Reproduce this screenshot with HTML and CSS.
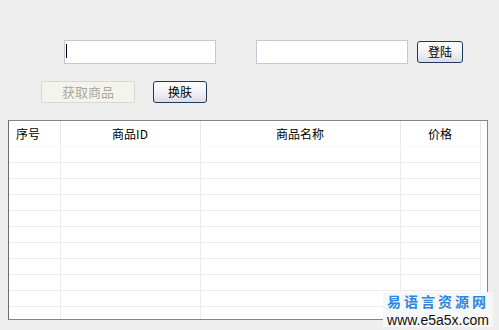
FILE: index.html
```html
<!DOCTYPE html>
<html lang="zh-CN">
<head>
  <meta charset="UTF-8" />
  <title>商品列表</title>
  <link rel="stylesheet" href="styles.css">
</head>
<body>
  <div class="login-row">
    <div class="field caret"><input type="text" class="box" /></div>
    <input type="password" class="box box-pass" />
    <button class="btn btn-login">登陆</button>
  </div>

  <div class="action-row">
    <button class="btn btn-disabled" disabled>获取商品</button>
    <button class="btn btn-skin">换肤</button>
  </div>

  <div class="list">
    <table class="grid">
      <colgroup>
        <col class="c-no"><col class="c-id"><col class="c-name"><col class="c-price">
      </colgroup>
      <thead>
        <tr>
          <th class="left">序号</th>
          <th>商品ID</th>
          <th>商品名称</th>
          <th>价格</th>
        </tr>
      </thead>
      <tbody id="rows"></tbody>
    </table>
  </div>

  <div class="mark">
    <div class="mark-cn">易语言资源网</div>
    <div class="mark-en">www.e5a5x.com</div>
  </div>

  <script>
    const rows = document.getElementById('rows');
    for (let i = 0; i < 11; i++) {
      const tr = document.createElement('tr');
      tr.innerHTML = '<td></td><td></td><td></td><td></td>';
      rows.appendChild(tr);
    }
  </script>
</body>
</html>
```

FILE: styles.css
```css
html, body {
  margin: 0;
  height: 100%;
}
body {
  font-family: "Noto Sans CJK SC", "Liberation Sans", sans-serif;
  font-size: 12px;
  background: #eeeeee;
  color: #000;
  position: relative;
  overflow: hidden;
}
.login-row {
  display: flex;
  align-items: center;
  padding: 40px 0 0 64px;
  height: 24px;
}
.field {
  position: relative;
}
.box {
  display: block;
  width: 152px;
  height: 24px;
  box-sizing: border-box;
  border: 1px solid #c4c6d4;
  background: #fff;
  margin: 0;
  padding: 0 3px;
  outline: none;
}
.caret::after {
  content: "";
  position: absolute;
  left: 2px;
  top: 4px;
  width: 1px;
  height: 14px;
  background: #000;
}
.box-pass {
  margin-left: 40px;
}
.btn {
  height: 22px;
  box-sizing: border-box;
  margin: 0;
  padding: 0;
  font-family: "Noto Sans CJK SC", sans-serif;
  font-size: 12px;
  line-height: 20px;
  color: #000;
  border: 1px solid #1c3a5e;
  border-radius: 3px;
  background: linear-gradient(#ffffff 0%, #f4f4f6 45%, #dcdce6 100%);
}
.btn-login {
  width: 46px;
  margin-left: 9px;
}
.action-row {
  display: flex;
  align-items: center;
  padding: 17px 0 0 41px;
  gap: 18px;
}
.btn-disabled {
  width: 94px;
  font-size: 13px;
  color: #aca899;
  border-color: #d8d8cc;
  border-radius: 2px;
  background: #f4f4ef;
}
.btn-skin {
  width: 54px;
}
.list {
  margin: 17px 0 0 8px;
  width: 480px;
  height: 200px;
  box-sizing: border-box;
  border: 1px solid #858585;
  border-left-color: #6e6e6e;
  background: #fff;
  overflow: hidden;
}
.grid {
  table-layout: fixed;
  border-collapse: collapse;
  width: 471px;
}
.c-no { width: 51px; }
.c-id { width: 140px; }
.c-name { width: 200px; }
.c-price { width: 80px; }
.grid th {
  height: 24px;
  padding: 0 0 1px 0;
  font-weight: normal;
  text-align: center;
  border-right: 1px solid #e6e6e6;
  border-bottom: 1px solid #fafafa;
}
.grid th.left {
  text-align: left;
  padding-left: 7px;
}
.grid td {
  height: 15px;
  padding: 0;
  border-right: 1px solid #ececec;
  border-bottom: 1px solid #ebebeb;
}
.mark {
  position: absolute;
  left: 383px;
  top: 292px;
  width: 110px;
  padding-top: 1px;
  background: #f7f7f7;
  text-align: center;
  white-space: nowrap;
}
.mark-cn {
  font-family: "Noto Sans CJK SC", sans-serif;
  font-size: 14px;
  font-weight: bold;
  line-height: 17px;
  letter-spacing: 3px;
  color: #2f86dc;
}
.mark-en {
  font-family: "Liberation Sans", sans-serif;
  font-size: 14px;
  line-height: 14px;
  margin-top: 3px;
  color: #111;
}
```
